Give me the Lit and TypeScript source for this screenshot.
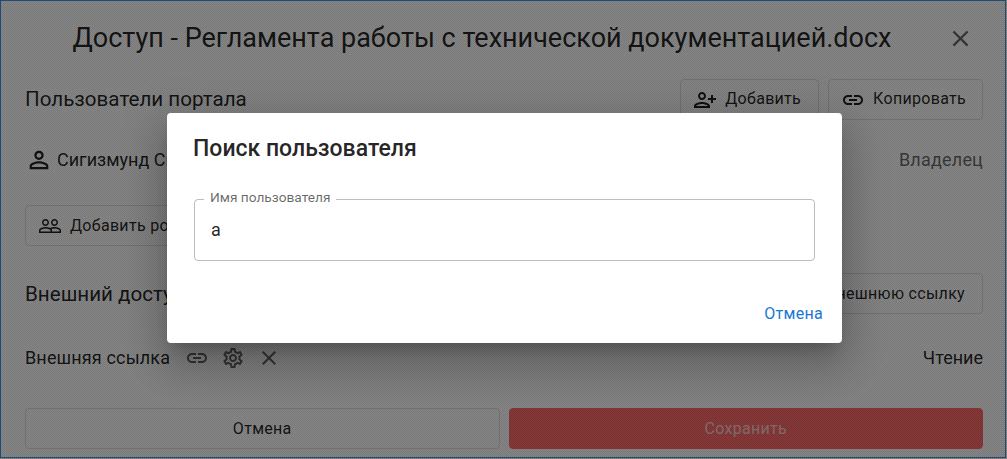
import { LitElement, html, css, svg } from "lit";
import { customElement } from "lit/decorators.js";

const P = {
  person: "M12 5.9c1.16 0 2.1.94 2.1 2.1s-.94 2.1-2.1 2.1S9.9 9.16 9.9 8s.94-2.1 2.1-2.1m0 9c2.97 0 6.1 1.46 6.1 2.1v1.1H5.9V17c0-.64 3.13-2.1 6.1-2.1M12 4C9.79 4 8 5.79 8 8s1.79 4 4 4 4-1.79 4-4-1.79-4-4-4zm0 9c-2.67 0-8 1.34-8 4v3h16v-3c0-2.66-5.33-4-8-4z",
  add: "M13 8c0-2.21-1.79-4-4-4S5 5.79 5 8s1.79 4 4 4 4-1.79 4-4zm-2 0c0 1.1-.9 2-2 2s-2-.9-2-2 .9-2 2-2 2 .9 2 2zM1 18v2h16v-2c0-2.66-5.33-4-8-4s-8 1.34-8 4zm2 0c.2-.71 3.3-2 6-2 2.69 0 5.77 1.28 6 2H3zm17-3v-3h3v-2h-3V7h-2v3h-3v2h3v3h2z",
  link: "M3.9 12c0-1.71 1.39-3.1 3.1-3.1h4V7H7c-2.76 0-5 2.24-5 5s2.24 5 5 5h4v-1.9H7c-1.71 0-3.1-1.39-3.1-3.1zM8 13h8v-2H8v2zm9-6h-4v1.9h4c1.71 0 3.1 1.39 3.1 3.1s-1.39 3.1-3.1 3.1h-4V17h4c2.76 0 5-2.24 5-5s-2.24-5-5-5z",
  close: "M19 6.41 17.59 5 12 10.59 6.41 5 5 6.41 10.59 12 5 17.59 6.41 19 12 13.41 17.59 19 19 17.59 13.41 12z",
  gear: "M19.43 12.98c.04-.32.07-.64.07-.98 0-.34-.03-.66-.07-.98l2.11-1.65c.19-.15.24-.42.12-.64l-2-3.46c-.09-.16-.26-.25-.44-.25-.06 0-.12.01-.17.03l-2.49 1c-.52-.4-1.08-.73-1.69-.98l-.38-2.65C14.46 2.18 14.25 2 14 2h-4c-.25 0-.46.18-.49.42l-.38 2.65c-.61.25-1.17.59-1.69.98l-2.49-1c-.06-.02-.12-.03-.18-.03-.17 0-.34.09-.43.25l-2 3.46c-.13.22-.07.49.12.64l2.11 1.65c-.04.32-.07.65-.07.98 0 .33.03.66.07.98l-2.11 1.65c-.19.15-.24.42-.12.64l2 3.46c.09.16.26.25.44.25.06 0 .12-.01.17-.03l2.49-1c.52.4 1.08.73 1.69.98l.38 2.65c.03.24.24.42.49.42h4c.25 0 .46-.18.49-.42l.38-2.65c.61-.25 1.17-.59 1.69-.98l2.49 1c.06.02.12.03.18.03.17 0 .34-.09.43-.25l2-3.46c.12-.22.07-.49-.12-.64l-2.11-1.65zm-1.98-1.71c.04.31.05.52.05.73 0 .21-.02.43-.05.73l-.14 1.13.89.7 1.08.84-.7 1.21-1.27-.51-1.04-.42-.9.68c-.43.32-.84.56-1.25.73l-1.06.43-.16 1.13-.2 1.35h-1.4l-.19-1.35-.16-1.13-1.06-.43c-.43-.18-.83-.41-1.23-.71l-.91-.7-1.06.43-1.27.51-.7-1.21 1.08-.84.89-.7-.14-1.13c-.03-.31-.05-.54-.05-.74s.02-.43.05-.73l.14-1.13-.89-.7-1.08-.84.7-1.21 1.27.51 1.04.42.9-.68c.43-.32.84-.56 1.25-.73l1.06-.43.16-1.13.2-1.35h1.39l.19 1.35.16 1.13 1.06.43c.43.18.83.41 1.23.71l.91.7 1.06-.43 1.27-.51.7 1.21-1.07.85-.89.7.14 1.13zM12 8c-2.21 0-4 1.79-4 4s1.79 4 4 4 4-1.79 4-4-1.79-4-4-4zm0 6c-1.1 0-2-.9-2-2s.9-2 2-2 2 .9 2 2-.9 2-2 2z",
  group: "M16.5 13c-1.2 0-3.07.34-4.5 1-1.43-.67-3.3-1-4.5-1C5.33 13 1 14.08 1 16.25V19h22v-2.75c0-2.17-4.33-3.25-6.5-3.25zm-4 4.5h-10v-1.25c0-.54 2.56-1.75 5-1.75s5 1.21 5 1.75v1.25zm9 0H14v-1.25c0-.46-.2-.86-.52-1.22.88-.3 1.96-.53 3.02-.53 2.44 0 5 1.21 5 1.75v1.25zM7.5 12c1.93 0 3.5-1.57 3.5-3.5S9.43 5 7.5 5 4 6.57 4 8.5 5.57 12 7.5 12zm0-5.5c1.1 0 2 .9 2 2s-.9 2-2 2-2-.9-2-2 .9-2 2-2zm9 5.5c1.93 0 3.5-1.57 3.5-3.5S18.43 5 16.5 5 13 6.57 13 8.5s1.57 3.5 3.5 3.5zm0-5.5c1.1 0 2 .9 2 2s-.9 2-2 2-2-.9-2-2 .9-2 2-2z",
};

const icon = (d: string, cls = "") =>
  html`<svg class="icon ${cls}" viewBox="0 0 24 24" fill="currentColor">${svg`<path d=${d}></path>`}</svg>`;

@customElement("app-root")
export class AppRoot extends LitElement {
  static styles = css`
    :host {
      display: block;
      width: 1007px;
      height: 459px;
      font-family: Roboto, "Noto Sans", sans-serif;
      color: rgba(0, 0, 0, 0.87);
      overflow: hidden;
    }
    .page {
      position: relative;
      box-sizing: border-box;
      width: 1006px;
      height: 458px;
      border: 1px solid #3d94ee;
      background: #fff;
      padding: 0 22px 0 24px;
      display: flex;
      flex-direction: column;
    }
    .icon { flex: none; display: block; width: 24px; height: 24px; }
    .icon.big { width: 28px; height: 28px; }
    .icon.x { width: 27px; height: 27px; }
    .head {
      height: 74px;
      display: flex;
      align-items: center;
      justify-content: center;
      padding-right: 44px;
      position: relative;
    }
    .title { font-size: 27px; font-weight: 400; line-height: 32px; margin: 0; white-space: nowrap; }
    .close { position: absolute; right: 9px; top: 24px; color: rgba(0, 0, 0, 0.6); }
    .row {
      display: flex;
      align-items: center;
      justify-content: space-between;
    }
    .t { margin-bottom: 2px; }
    .r1 { height: 49px; margin-bottom: 16px; }
    .h2 { font-size: 20.6px; line-height: 28px; }
    .btns { display: flex; gap: 9px; }
    .btn {
      box-sizing: border-box;
      height: 41px;
      border: 1px solid rgba(0, 0, 0, 0.12);
      border-radius: 4px;
      display: flex;
      align-items: center;
      justify-content: center;
      gap: 8px;
      font-size: 16px;
      letter-spacing: 0.3px;
      padding: 0 17px 0 12px;
      white-space: nowrap;
    }
    .btn.tight { padding-right: 16px; }
    .muted { color: rgba(0, 0, 0, 0.6); letter-spacing: 0.2px; }
    .r2 { height: 40px; font-size: 18px; }
    .user { display: flex; align-items: center; gap: 4px; }
    .r3 { margin-top: 25px; height: 41px; }
    .r4 { margin-top: 27px; height: 41px; }
    .r5 { margin-top: 24px; height: 40px; font-size: 18px; }
    .ext { display: flex; align-items: center; letter-spacing: 0.15px; }
    .icons { display: flex; gap: 12px; margin-left: 15px; color: rgba(0, 0, 0, 0.6); }
    .foot { margin-top: 30px; display: flex; gap: 9px; }
    .foot .btn { flex: 1; padding: 0; }
    .foot .save { background: #ff6a6a; border-color: #ff6a6a; color: rgba(255, 255, 255, 0.7); }
    .overlay {
      position: absolute;
      left: -1px;
      top: -1px;
      width: 1007px;
      height: 459px;
      background: repeating-conic-gradient(rgba(0, 0, 0, 0.47) 0 25%, rgba(0, 0, 0, 0.53) 0 50%) 0 0 / 2px 2px;
    }
    .dialog {
      position: absolute;
      left: 166px;
      top: 112px;
      width: 675px;
      height: 230px;
      box-sizing: border-box;
      background: #fff;
      border-radius: 4px;
      padding: 20px 27px 0 27px;
      box-shadow: 0 11px 15px -7px rgba(0, 0, 0, 0.2), 0 24px 38px 3px rgba(0, 0, 0, 0.14), 0 9px 46px 8px rgba(0, 0, 0, 0.12);
      display: flex;
      flex-direction: column;
    }
    .dtitle { font-size: 23px; font-weight: 500; line-height: 32px; margin: 0 0 0 -1px; }
    .field {
      position: relative;
      box-sizing: border-box;
      width: 621px;
      height: 62px;
      margin-top: 34px;
      border: 1px solid rgba(0, 0, 0, 0.26);
      border-radius: 4px;
      display: flex;
      align-items: center;
      padding: 0 0 2px 16px;
      font-size: 18px;
    }
    .label {
      position: absolute;
      left: 9px;
      top: -12px;
      padding: 0 6px;
      background: #fff;
      font-size: 13.7px;
      line-height: 18px;
      color: rgba(0, 0, 0, 0.6);
    }
    .cancel {
      margin-top: 43px;
      margin-right: -8px;
      align-self: flex-end;
      color: #1976d2;
      font-size: 16px;
      line-height: 20px;
      letter-spacing: 0.3px;
    }
  `;

  render() {
    return html`
      <div class="page">
        <header class="head">
          <h1 class="title">Доступ - Регламента работы с технической документацией.docx</h1>
          <span class="close">${icon(P.close, "x")}</span>
        </header>
        <div class="row r1">
          <div class="h2 t">Пользователи портала</div>
          <div class="btns">
            <div class="btn">${icon(P.add)}<span class="t">Добавить</span></div>
            <div class="btn tight">${icon(P.link)}<span class="t">Копировать</span></div>
          </div>
        </div>
        <div class="row r2">
          <div class="user">${icon(P.person, "big")}<span class="t">Сигизмунд Сидоров</span></div>
          <div class="muted t">Владелец</div>
        </div>
        <div class="row r3">
          <div class="btn">${icon(P.group)}Добавить роль</div>
        </div>
        <div class="row r4">
          <div class="h2">Внешний доступ</div>
          <div class="btn">Создать внешнюю ссылку</div>
        </div>
        <div class="row r5">
          <div class="ext">
            <span class="t">Внешняя ссылка</span>
            <span class="icons">${icon(P.link)}${icon(P.gear)}${icon(P.close)}</span>
          </div>
          <div class="t">Чтение</div>
        </div>
        <div class="foot">
          <div class="btn">Отмена</div>
          <div class="btn save">Сохранить</div>
        </div>
        <div class="overlay"></div>
        <div class="dialog">
          <h2 class="dtitle">Поиск пользователя</h2>
          <div class="field">
            <span class="label">Имя пользователя</span>
            а
          </div>
          <div class="cancel">Отмена</div>
        </div>
      </div>
    `;
  }
}
